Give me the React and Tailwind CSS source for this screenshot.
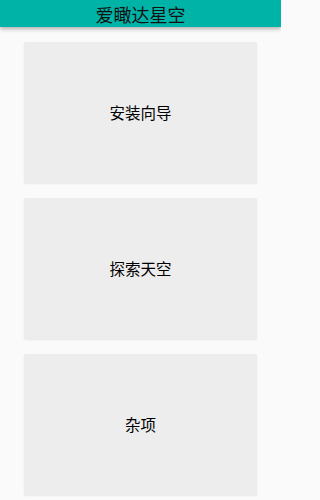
export default function App() {
  const items = ['安装向导', '探索天空', '杂项']

  return (
    <div
      className="min-h-screen w-full bg-[#fafafa]"
      style={{ fontFamily: '"Noto Sans CJK SC", "Noto Sans", sans-serif' }}
    >
      <div className="w-[281px] h-[500px] overflow-hidden">
        {/* Header */}
        <div className="relative z-10 h-[27px] bg-[#00b3a7] flex items-center justify-center shadow-[0_2px_4px_rgba(0,0,0,0.3)]">
          <h1 className="text-[18px] leading-none text-[#111]">爱瞰达星空</h1>
        </div>

        {/* Menu cards */}
        <div className="flex flex-col gap-[15px] px-[24px] pt-[15px]">
          {items.map((label) => (
            <button
              key={label}
              className="h-[141px] w-full rounded-[2px] bg-[#ededed] shadow-[0_1px_2px_rgba(0,0,0,0.08)] flex items-center justify-center text-[15.5px] text-black"
            >
              {label}
            </button>
          ))}
        </div>
      </div>
    </div>
  )
}
